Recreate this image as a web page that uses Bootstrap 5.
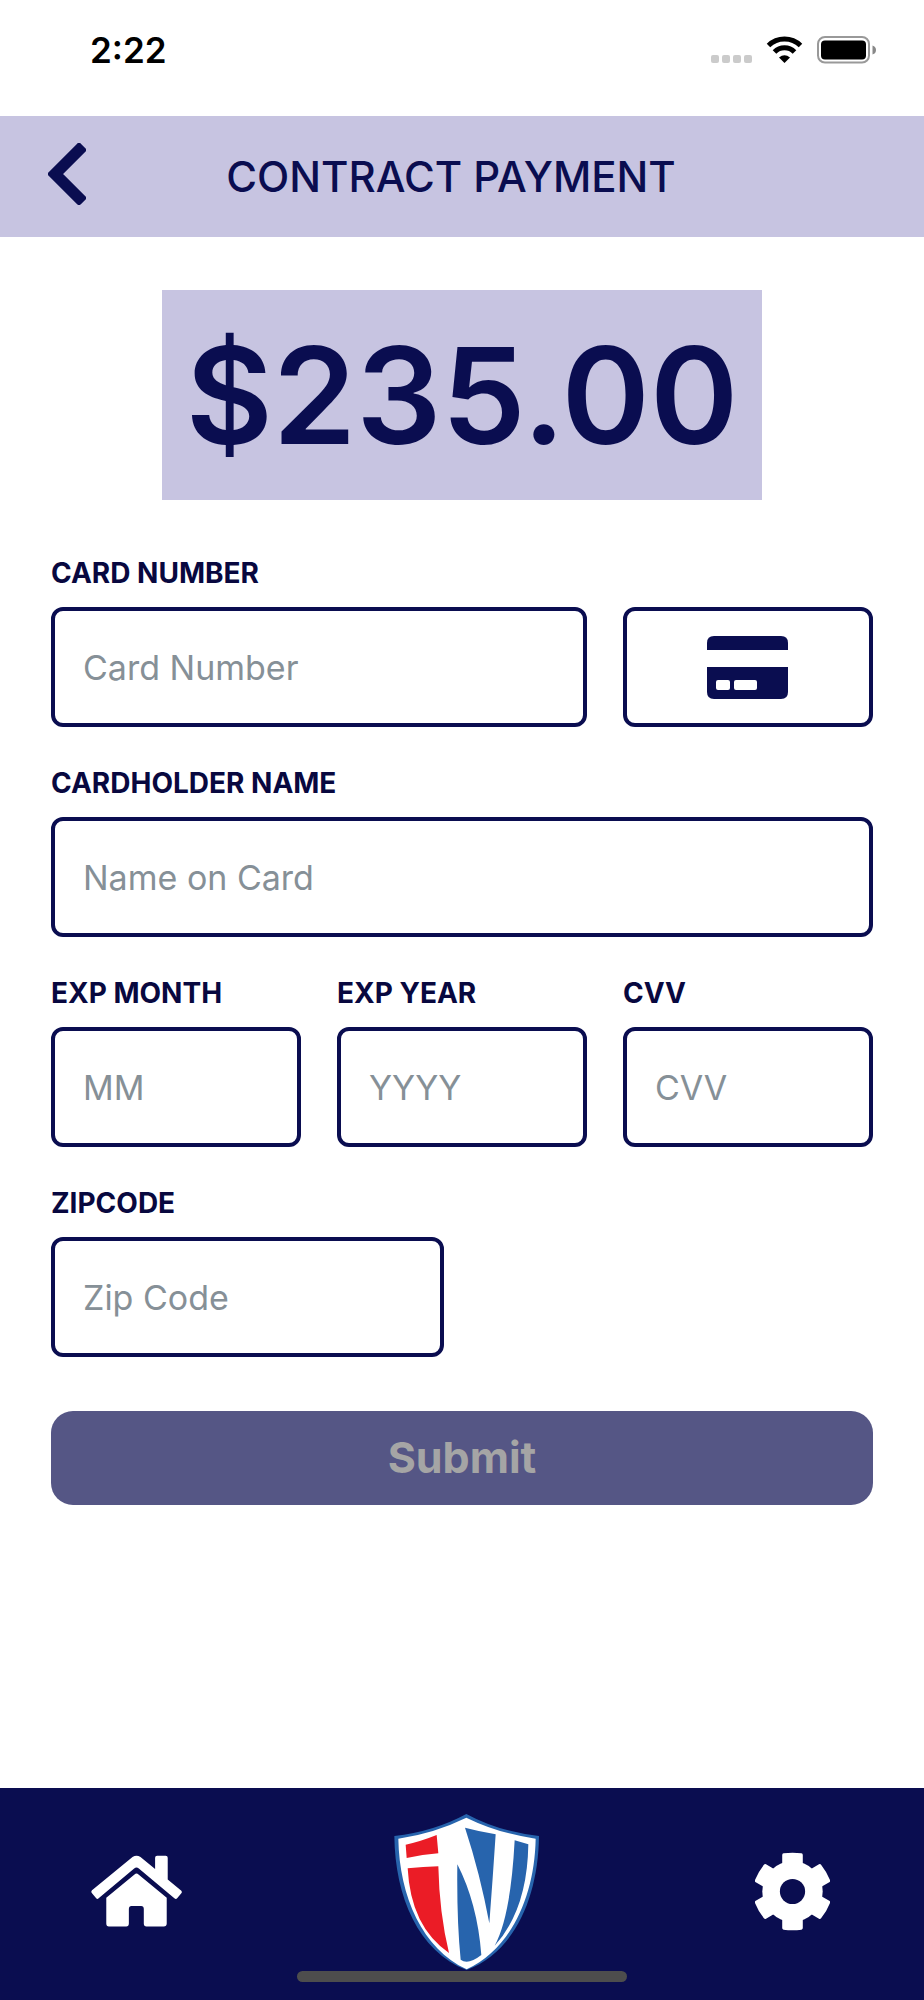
<!DOCTYPE html>
<html lang="en">
<head>
<meta charset="utf-8">
<meta name="viewport" content="width=device-width, initial-scale=1">
<title>Contract Payment</title>
<link href="https://cdn.jsdelivr.net/npm/bootstrap@5.3.0/dist/css/bootstrap.min.css" rel="stylesheet">
<style>
  :root { --navy: #0a0d50; --lavender: #c7c4e1; }
  body { font-family: Inter, "Liberation Sans", sans-serif; color: var(--navy); background: #fff; }
  svg { display: block; }
  .status-bar { height: 116px; padding: 0 48px 16px 90px; color: #000; }
  .clock { font-size: 35px; line-height: 40px; font-weight: 600; }
  .title-bar { background: var(--lavender); height: 121px; padding: 0 108px 0 48px; }
  .back-btn { padding: 0 0 5px; }
  .screen-title { font-size: 42px; line-height: 52px; font-weight: 500; }
  .amount { background: var(--lavender); width: 600px; max-width: 100%; height: 210px; font-size: 134px; line-height: 168px; font-weight: 600; }
  .pay-form { padding: 53px 51px 0; }
  .fields { --bs-gutter-x: 36px; --bs-gutter-y: 38px; margin-top: 19px; }
  .field-label { display: block; font-size: 28px; line-height: 32px; font-weight: 700; margin-bottom: 18px; color: #08083f; }
  .field-box, .field-box:focus { height: 120px; border: 4px solid var(--navy); border-radius: 12px; padding: 0 28px; font-size: 34px; line-height: 44px; background: #fff; color: var(--navy); }
  .field-box::placeholder { color: #869097; }
  .fields > div { padding-bottom: 2px; }
  .submit-btn, .submit-btn:disabled { height: 94px; margin-top: 52px; border: 0; border-radius: 22px; background: #555685; color: #a5a5a5; font-size: 43px; line-height: 52px; font-weight: 700; opacity: 1; padding: 0 0 2px; }
  .tab-bar { background: var(--navy); padding: 26px 94px 30px 91px; }
  .tab-bar a { margin-bottom: 2px; }
  .tab-bar .logo-link { margin: 0 4px 0 0; }
  .home-indicator { left: 50%; bottom: 18px; width: 330px; height: 11px; margin-left: -165px; border-radius: 6px; background: #4d4d4d; }
</style>
</head>
<body>
<div class="d-flex flex-column min-vh-100">
  <div class="status-bar d-flex align-items-center justify-content-between">
    <span class="clock">2:22</span>
    <svg width="165" height="28" viewBox="0 0 165 28" role="img" aria-label="No signal, Wi-Fi, battery full">
      <g fill="#cbcbcb"><rect x="0" y="19" width="8" height="8" rx="2"/><rect x="11" y="19" width="8" height="8" rx="2"/><rect x="22" y="19" width="8" height="8" rx="2"/><rect x="33" y="19" width="8" height="8" rx="2"/></g>
      <g fill="none" stroke="#000" stroke-width="5"><path d="M57.500 9.500A23 23 0 0 1 89.500 9.500"/><path d="M63.500 16A14 14 0 0 1 83.500 16"/></g>
      <path d="M68 21.500Q73.500 17 79 21.500L73.500 27z"/>
      <rect x="107" y="1" width="51" height="25.500" rx="7" fill="none" stroke="#999" stroke-width="2"/>
      <rect x="110" y="4.500" width="45" height="19" rx="4"/>
      <path d="M161.500 9.500Q165 10.500 165 14T161.500 18.500z" fill="#888"/>
    </svg>
  </div>

  <header class="title-bar d-flex align-items-center">
    <button type="button" class="btn back-btn border-0" aria-label="Back">
      <svg width="38" height="62" viewBox="0 0 38 62"><path d="M3 31L31 3L35 7L11 31L35 55L31 59z" fill="#0a0d50" stroke="#0a0d50" stroke-width="6" stroke-linejoin="round"/></svg>
    </button>
    <h1 class="screen-title flex-grow-1 text-center text-nowrap mb-0">CONTRACT PAYMENT</h1>
  </header>

  <main class="flex-grow-1">
    <form class="pay-form">
      <div class="amount d-flex align-items-center justify-content-center mx-auto">$235.00</div>
      <div class="row fields">
        <div class="col-8">
          <label class="field-label" for="cardNumber">CARD NUMBER</label>
          <input id="cardNumber" class="form-control field-box" type="text" inputmode="numeric" placeholder="Card Number">
        </div>
        <div class="col-4 d-flex align-items-end">
          <button type="button" class="btn field-box w-100 d-flex align-items-center justify-content-center" aria-label="Scan card">
            <svg width="81" height="63" viewBox="0 0 81 63" fill="#0a0d50"><path d="M0 14V7Q0 0 7 0H74Q81 0 81 7V14z"/><path fill-rule="evenodd" d="M0 31H81V56Q81 63 74 63H7Q0 63 0 56zM11 44Q9 44 9 46V52Q9 54 11 54H21Q23 54 23 52V46Q23 44 21 44zM29 44Q27 44 27 46V52Q27 54 29 54H48Q50 54 50 52V46Q50 44 48 44z"/></svg>
          </button>
        </div>
        <div class="col-12">
          <label class="field-label" for="cardName">CARDHOLDER NAME</label>
          <input id="cardName" class="form-control field-box" type="text" placeholder="Name on Card">
        </div>
        <div class="col-4">
          <label class="field-label" for="expMonth">EXP MONTH</label>
          <input id="expMonth" class="form-control field-box" type="text" inputmode="numeric" placeholder="MM">
        </div>
        <div class="col-4">
          <label class="field-label" for="expYear">EXP YEAR</label>
          <input id="expYear" class="form-control field-box" type="text" inputmode="numeric" placeholder="YYYY">
        </div>
        <div class="col-4">
          <label class="field-label" for="cvv">CVV</label>
          <input id="cvv" class="form-control field-box" type="text" inputmode="numeric" placeholder="CVV">
        </div>
        <div class="col-6">
          <label class="field-label" for="zip">ZIPCODE</label>
          <input id="zip" class="form-control field-box" type="text" inputmode="numeric" placeholder="Zip Code">
        </div>
      </div>
      <button type="submit" class="btn submit-btn w-100" disabled>Submit</button>
    </form>
  </main>

  <nav class="tab-bar position-relative d-flex align-items-center justify-content-between" aria-label="Main">
    <a href="#home" aria-label="Home">
      <svg width="91" height="72" viewBox="92 224 274 216" fill="#fff"><path d="M95 330L217 230Q229 222 241 230L285 266V232Q285 226 291 226H317Q323 226 323 232V297L364 331Q367 335 364 339L352 353Q348 358 343 354L236 264Q229 259 222 264L115 354Q111 358 107 353L95 339Q91 334 95 330z"/><path d="M138 352L223 282Q229 277 235 282L320 352V430Q320 439 311 439H259Q251 439 251 430V386Q251 377 243 377H214Q206 377 206 386V430Q206 439 198 439H146Q138 439 138 430z"/></svg>
    </a>
    <a href="#dashboard" class="logo-link" aria-label="Dashboard">
      <svg width="145" height="156" viewBox="42 102 435 468"><path d="M259 102Q357 155 477 168C475 350 405 515 260 570C115 515 45 350 43 168Q161 155 259 102z" fill="#2764ad"/><path d="M259 113Q355 160 467 176C464 350 392 507 260 568C128 507 58 350 55 176Q163 160 259 113z" fill="#fff"/><path d="M77 194Q120 185 170 165L175 220Q128 224 80 234zM83 265Q130 260 175 259Q178 400 207 519Q92 440 83 265z" fill="#eb1c26"/><path d="M255 143Q301 155 347 163Q338 300 328 430Q300 280 255 143zM404 181L445 193Q442 390 344 497Q392 410 404 181zM232 253Q292 370 304 525Q264 556 242 539Q230 420 232 253z" fill="#2764ad"/></svg>
    </a>
    <a href="#settings" aria-label="Settings">
      <svg width="75" height="79" viewBox="164 214 226 236"><g fill="#fff"><circle cx="277" cy="332" r="91"/><path id="cogTooth" d="M246 260V222Q246 218 250 217Q277 213 304 217Q308 218 308 222V260zM246 404V442Q246 446 250 447Q277 451 304 447Q308 446 308 442V404z"/><use href="#cogTooth" transform="rotate(60 277 332)"/><use href="#cogTooth" transform="rotate(120 277 332)"/></g><circle cx="277" cy="332" r="38" fill="#0a0d50"/></svg>
    </a>
    <div class="home-indicator position-absolute"></div>
  </nav>
</div>
<script src="https://cdn.jsdelivr.net/npm/bootstrap@5.3.0/dist/js/bootstrap.bundle.min.js"></script>
</body>
</html>
